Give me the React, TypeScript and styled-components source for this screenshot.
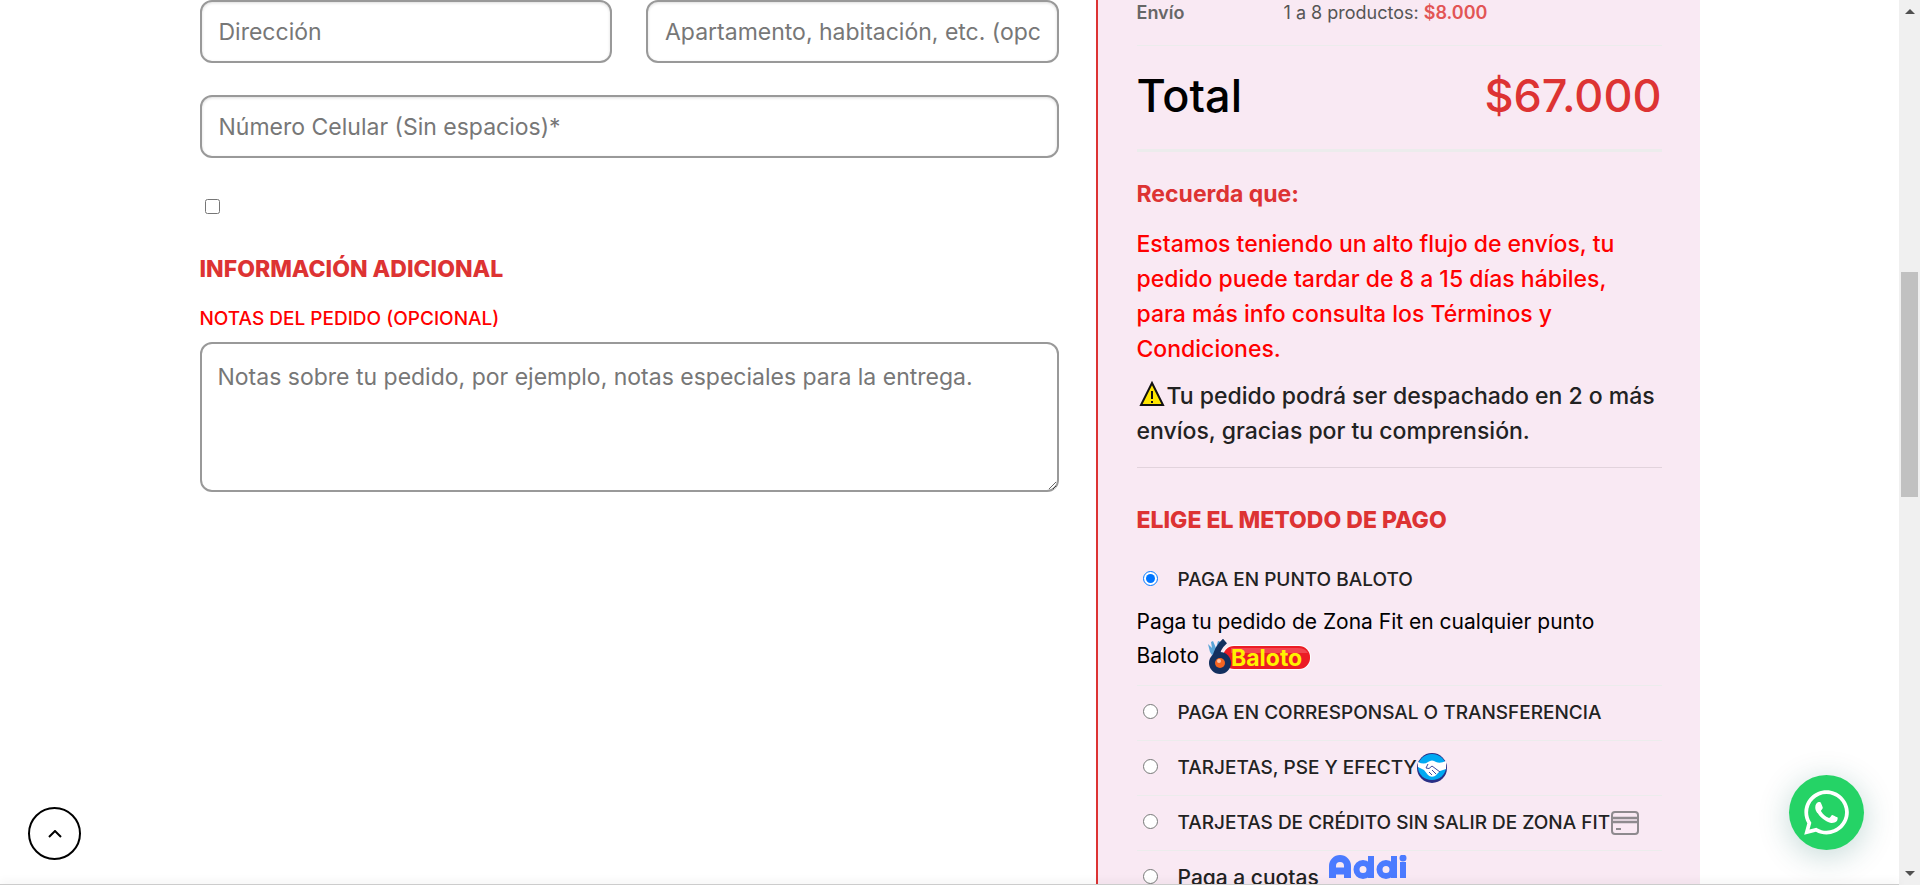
import React from "react";
import styled, { createGlobalStyle } from "styled-components";
import { FaWhatsapp } from "react-icons/fa";

const brand = "#dd3333";

const GlobalStyle = createGlobalStyle`
  *, *::before, *::after { box-sizing: border-box; }
  body {
    margin: 0;
    background: #fff;
    color: #222;
    font-family: Inter, "Open Sans", sans-serif;
    font-size: 19px;
  }
  input, textarea, button { font-family: inherit; }
`;

const Page = styled.div`
  display: flex;
  height: 100vh;
  overflow: hidden;
`;

const Viewport = styled.main`
  flex: 1;
  min-width: 0;
`;

const Checkout = styled.form`
  display: grid;
  grid-template-columns: minmax(0, 859fr) minmax(0, 604fr);
  column-gap: 37px;
  max-width: 1500px;
  margin: 0 auto;
`;

const Billing = styled.section`
  display: flex;
  flex-direction: column;
`;

const FieldRow = styled.div`
  display: flex;
  gap: 34px;
  margin-bottom: 32px;
`;

const TextField = styled.input`
  flex: 1;
  min-width: 0;
  height: 63px;
  padding: 0 17px;
  border: 2px solid #999;
  border-radius: 12px;
  background: #fff;
  box-shadow: inset 0 1px 3px rgba(0, 0, 0, 0.14);
  font-size: 23px;
  color: #444;
  &::placeholder { color: #777; opacity: 1; }
`;

const Notes = styled.textarea`
  height: 150px;
  padding: 16px;
  border: 2px solid #999;
  border-radius: 12px;
  background: #fff;
  font-size: 23px;
  line-height: 34px;
  resize: vertical;
  &::placeholder { color: #777; opacity: 1; }
`;

const Tick = styled.input`
  width: 15px;
  height: 15px;
  margin: 9px 5px 37px;
`;

const Heading = styled.h3`
  margin: 0;
  color: ${brand};
  font-size: 23px;
  font-weight: 800;
  line-height: 36px;
`;

const NotesLabel = styled.label`
  margin: 16px 0 7px;
  color: #f00;
  font-size: 19px;
  font-weight: 500;
  line-height: 32px;
`;

const Summary = styled.section`
  border-left: 2px solid ${brand};
  background: #f9e9f3;
  padding: 0 38px 0 39px;
`;

const Totals = styled.table`
  width: 100%;
  border-collapse: collapse;
  th, td { padding: 0; text-align: left; vertical-align: top; }
`;

const ShippingRow = styled.tr`
  height: 45px;
  border-bottom: 1px solid #ececec;
  font-size: 18px;
  line-height: 26px;
  color: #666;
  th { width: 147px; font-weight: 600; }
  td { color: #555; }
  strong { color: #e25555; font-weight: 600; }
`;

const TotalRow = styled.tr`
  height: 105px;
  border-bottom: 3px solid #ececec;
  color: #000;
  font-size: 45px;
  line-height: 99px;
  th { font-weight: 500; }
  td { text-align: right; color: ${brand}; font-weight: 500; }
`;

const Reminder = styled.h4`
  margin: 24px 0 15px;
  color: ${brand};
  font-size: 23px;
  font-weight: 700;
  line-height: 36px;
`;

const Notice = styled.p<{ $alert?: boolean }>`
  margin: 0 0 12px;
  color: ${(p) => (p.$alert ? "#f00" : "#222")};
  font-size: 23px;
  font-weight: 500;
  line-height: 35px;
`;

const WarningIcon = styled.svg`
  vertical-align: -4px;
`;

const Divider = styled.hr`
  height: 1px;
  margin: 18px 0 34px;
  border: 0;
  background: #e2d3dc;
`;

const Methods = styled.ul`
  margin: 17px 0 0;
  padding: 0;
  list-style: none;
`;

const Method = styled.li`
  border-bottom: 1px solid #ececec;
`;

const MethodLabel = styled.label<{ $open?: boolean; $large?: boolean }>`
  display: flex;
  align-items: center;
  height: ${(p) => (p.$open ? 50 : 54)}px;
  font-size: ${(p) => (p.$large ? 21 : 19)}px;
  font-weight: 500;
  white-space: nowrap;
`;

const Radio = styled.input`
  width: 15px;
  height: 15px;
  margin: 0 20px 3px 6px;
`;

const MethodInfo = styled.p`
  margin: 0;
  padding-bottom: 12px;
  color: #000;
  font-size: 21px;
  line-height: 34px;
`;

const BalotoLogo = styled.svg`
  margin: -4px 0;
  vertical-align: middle;
`;

const AddiLogo = styled.svg`
  align-self: flex-start;
  margin: 4px 0 0 10px;
`;

const Scrollbar = styled.div`
  display: flex;
  flex-direction: column;
  justify-content: space-between;
  align-items: center;
  position: relative;
  width: 21px;
  padding: 9px 0;
  background: #f0f0f0;
`;

const Thumb = styled.div`
  position: absolute;
  top: 272px;
  left: 2px;
  width: 17px;
  height: 225px;
  background: #c1c1c1;
`;

const BackToTop = styled.button`
  position: fixed;
  left: 28px;
  bottom: 25px;
  display: flex;
  align-items: center;
  justify-content: center;
  width: 53px;
  height: 53px;
  padding: 0;
  border: 2px solid #000;
  border-radius: 50%;
  background: #fff;
`;

const Chat = styled.a`
  position: fixed;
  right: 56px;
  bottom: 35px;
  display: flex;
  align-items: center;
  justify-content: center;
  width: 75px;
  height: 75px;
  border-radius: 50%;
  background: #25d366;
  color: #fff;
  box-shadow: 0 6px 32px rgba(7, 94, 84, 0.24);
`;

const BottomEdge = styled.div`
  position: fixed;
  left: 0;
  right: 21px;
  bottom: 0;
  height: 1px;
  background: #ccc;
  box-shadow: 0 0 10px rgba(0, 0, 0, 0.3);
`;

function Warning() {
  return (
    <WarningIcon width="30" height="28" viewBox="0 0 30 28" aria-hidden="true">
      <path d="M15 3 26 25H4Z" fill="#ffe600" stroke="#111" strokeWidth="2" />
      <path d="M15 11v8m0 2v2" stroke="#111" strokeWidth="2" />
    </WarningIcon>
  );
}

function Baloto() {
  return (
    <BalotoLogo width="108" height="36" viewBox="0 0 108 36" role="img" aria-label="Baloto">
      <rect x="17" y="6" width="89" height="25" rx="12" fill="#fff" />
      <rect x="18" y="7" width="87" height="23" rx="11" fill="#ec1c24" />
      <path d="M26 9h67q7 0 10 5H26Z" fill="#f7606a" opacity=".6" />
      <text x="26" y="27" fill="#fff200" fontFamily="Inter, sans-serif" fontSize="23" fontWeight="700">Baloto</text>
      <path d="M3 5l2 8 4 6 7-6V3l-3-1-2 7-3-7-2 1 1 6Z" fill="#5aa5d8" />
      <path d="M20 2q-8 7-10 18" fill="none" stroke="#12305f" strokeWidth="6" />
      <circle cx="15" cy="24" r="11" fill="#12305f" />
      <circle cx="15" cy="24" r="5" fill="#f26522" />
      <circle cx="14" cy="22" r="2" fill="#fbc5a8" />
    </BalotoLogo>
  );
}

function Handshake() {
  return (
    <svg width="30" height="32" viewBox="0 0 30 32" aria-hidden="true">
      <circle cx="15" cy="16" r="15" fill="#2a2f86" />
      <ellipse cx="15" cy="15" rx="14" ry="13" fill="#00a9f2" />
      <path d="M1 10q6 3 10 0 4-3 8 0 4 2 10-1v8l-6 2-5 5q-4 2-7-1l-4-5-6-3Z" fill="#fff" />
      <path d="M11 12l-2 4q3 2 6-2l8 6M12 20l3 3m0-5 4 4" fill="none" stroke="#3c4aa0" strokeWidth="1" />
    </svg>
  );
}

function Card() {
  return (
    <svg width="30" height="26" viewBox="0 0 30 26" fill="none" stroke="#8e8a8e" strokeWidth="2" aria-hidden="true">
      <rect x="2" y="2" width="26" height="22" rx="3" />
      <path d="M2 8h26M2 12h26" strokeWidth="2.5" />
      <path d="M6 19h5" />
    </svg>
  );
}

function Addi() {
  return (
    <AddiLogo width="78" height="24" viewBox="0 0 78 24" fill="none" stroke="#4b7bff" strokeWidth="6" role="img" aria-label="Addi">
      <path d="M3.500 23V11a7 7 0 0 1 15 0V23M6 16h10" strokeWidth="7" />
      <circle cx="34" cy="14.500" r="6.500" />
      <path d="M42 1v22M65 1v22" />
      <circle cx="57" cy="14.500" r="6.500" />
      <path d="M74 7v16" />
      <circle cx="74" cy="3" r="3.500" fill="#4b7bff" stroke="none" />
    </AddiLogo>
  );
}

const methods = [
  { id: "corresponsal", label: "PAGA EN CORRESPONSAL O TRANSFERENCIA" },
  { id: "efecty", label: "TARJETAS, PSE Y EFECTY", icon: <Handshake /> },
  { id: "credito", label: "TARJETAS DE CRÉDITO SIN SALIR DE ZONA FIT", icon: <Card /> },
  { id: "addi", label: "Paga a cuotas", icon: <Addi />, large: true },
];

export default function App() {
  return (
    <Page>
      <GlobalStyle />
      <Viewport>
        <Checkout>
          <Billing>
            <FieldRow>
              <TextField aria-label="Dirección" placeholder="Dirección" />
              <TextField aria-label="Apartamento" placeholder="Apartamento, habitación, etc. (opcional)" />
            </FieldRow>
            <FieldRow>
              <TextField type="tel" aria-label="Número Celular" placeholder="Número Celular (Sin espacios)*" />
            </FieldRow>
            <Tick type="checkbox" aria-label="Acepto" />
            <Heading>INFORMACIÓN ADICIONAL</Heading>
            <NotesLabel htmlFor="notes">NOTAS DEL PEDIDO (OPCIONAL)</NotesLabel>
            <Notes id="notes" placeholder="Notas sobre tu pedido, por ejemplo, notas especiales para la entrega." />
          </Billing>
          <Summary>
            <Totals>
              <tbody>
                <ShippingRow>
                  <th scope="row">Envío</th>
                  <td>1 a 8 productos: <strong>$8.000</strong></td>
                </ShippingRow>
                <TotalRow>
                  <th scope="row">Total</th>
                  <td>$67.000</td>
                </TotalRow>
              </tbody>
            </Totals>
            <Reminder>Recuerda que:</Reminder>
            <Notice $alert>
              Estamos teniendo un alto flujo de envíos, tu pedido puede tardar de 8 a 15 días hábiles, para más info consulta los Términos y Condiciones.
            </Notice>
            <Notice>
              <Warning />Tu pedido podrá ser despachado en 2 o más envíos, gracias por tu comprensión.
            </Notice>
            <Divider />
            <Heading>ELIGE EL METODO DE PAGO</Heading>
            <Methods>
              <Method>
                <MethodLabel $open>
                  <Radio type="radio" name="payment" value="baloto" defaultChecked />
                  PAGA EN PUNTO BALOTO
                </MethodLabel>
                <MethodInfo>Paga tu pedido de Zona Fit en cualquier punto Baloto <Baloto /></MethodInfo>
              </Method>
              {methods.map((m) => (
                <Method key={m.id}>
                  <MethodLabel $large={m.large}>
                    <Radio type="radio" name="payment" value={m.id} />
                    {m.label}
                    {m.icon}
                  </MethodLabel>
                </Method>
              ))}
            </Methods>
          </Summary>
        </Checkout>
      </Viewport>
      <Scrollbar aria-hidden="true">
        <svg width="10" height="5"><path d="M0 5 5 0l5 5Z" fill="#505050" /></svg>
        <Thumb />
        <svg width="10" height="5"><path d="M0 0l5 5 5-5Z" fill="#505050" /></svg>
      </Scrollbar>
      <BottomEdge />
      <BackToTop type="button" aria-label="Volver arriba">
        <svg width="14" height="8" fill="none" stroke="#000" strokeWidth="2"><path d="M1 7 7 1l6 6" /></svg>
      </BackToTop>
      <Chat href="#chat" aria-label="WhatsApp"><FaWhatsapp size={51} /></Chat>
    </Page>
  );
}
